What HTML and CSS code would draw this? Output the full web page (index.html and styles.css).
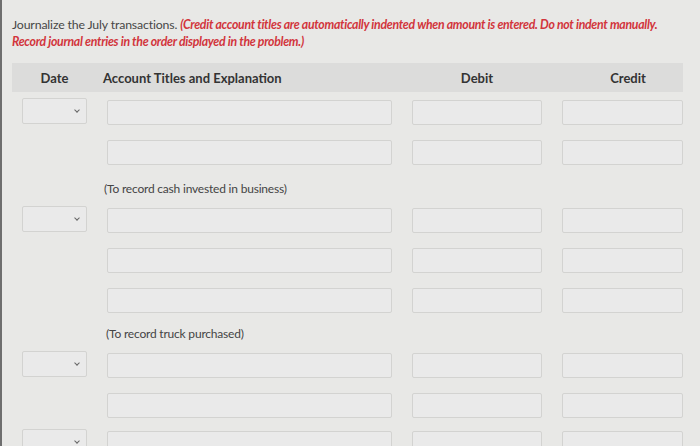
FILE: index.html
```
<!DOCTYPE html>
<html>
<head>
<meta charset="utf-8">
<link rel="stylesheet" href="styles.css">
</head>
<body>
<div class="page">
  <div class="intro">
    <div class="line">Journalize the July transactions. <em class="note">(Credit account titles are automatically indented when amount is entered. Do not indent manually.</em></div>
    <div class="line"><em class="note">Record journal entries in the order displayed in the problem.)</em></div>
  </div>
  <div class="table">
    <div class="head">
      <div class="h-date">Date</div>
      <div class="h-acct">Account Titles and Explanation</div>
      <div class="h-debit">Debit</div>
      <div class="h-credit">Credit</div>
    </div>

    <div class="row">
      <div class="sel"><span class="chev"></span></div>
      <div class="box acct"></div><div class="box debit"></div><div class="box credit"></div>
    </div>
    <div class="row">
      <div class="nosel"></div>
      <div class="box acct"></div><div class="box debit"></div><div class="box credit"></div>
    </div>
    <div class="expl">(To record cash invested in business)</div>

    <div class="row">
      <div class="sel"><span class="chev"></span></div>
      <div class="box acct"></div><div class="box debit"></div><div class="box credit"></div>
    </div>
    <div class="row">
      <div class="nosel"></div>
      <div class="box acct"></div><div class="box debit"></div><div class="box credit"></div>
    </div>
    <div class="row">
      <div class="nosel"></div>
      <div class="box acct"></div><div class="box debit"></div><div class="box credit"></div>
    </div>
    <div class="expl expl2">(To record truck purchased)</div>

    <div class="row">
      <div class="sel"><span class="chev"></span></div>
      <div class="box acct"></div><div class="box debit"></div><div class="box credit"></div>
    </div>
    <div class="row">
      <div class="nosel"></div>
      <div class="box acct"></div><div class="box debit"></div><div class="box credit"></div>
    </div>
    <div class="row last">
      <div class="sel"><span class="chev"></span></div>
      <div class="box acct"></div><div class="box debit"></div><div class="box credit"></div>
    </div>
  </div>
</div>
</body>
</html>
```
FILE: styles.css
```
html, body {
  margin: 0;
  padding: 0;
  height: 100%;
  overflow: hidden;
}
body {
  background: #e8e8e6;
  font-family: Lato, "Open Sans", sans-serif;
  color: #3d3d3d;
  border-left: 2px solid #6e6e6e;
  box-sizing: border-box;
}
.page {
  padding: 16px 0 0 10px;
}
.intro {
  font-size: 12.3px;
  line-height: 17px;
  letter-spacing: -0.15px;
  color: #474747;
}
.line {
  white-space: nowrap;
}
.note {
  color: #d2353c;
  font-weight: 700;
  letter-spacing: -0.3px;
}
.table {
  margin-top: 13px;
  width: 671px;
}
.head {
  display: grid;
  grid-template-columns: 85px 304px 150px 132px;
  height: 29px;
  align-items: center;
  background: #dcdcdb;
  font-weight: 700;
  font-size: 13px;
  color: #333;
}
.h-date { text-align: center; }
.h-acct { padding-left: 6px; }
.h-debit { text-align: center; padding-left: 2px; }
.h-credit { text-align: center; padding-left: 22px; }
.row {
  display: grid;
  grid-template-columns: 64px 285px 130px 121px;
  column-gap: 20px;
  height: 25px;
  margin-left: 11px;
  margin-top: 15px;
}
.head + .row { margin-top: 8px; }
.row.last { margin-top: 13px; }
.sel, .box {
  border: 1px solid #d3d3d1;
  border-radius: 2px;
  background: #eaeaea;
  box-sizing: border-box;
}
.sel {
  position: relative;
  margin-top: -2px;
  margin-left: -1px;
  height: 26px;
}
.chev {
  position: absolute;
  right: 7px;
  top: 9px;
  width: 3px;
  height: 3px;
  border-right: 1.5px solid #666;
  border-bottom: 1.5px solid #666;
  transform: rotate(45deg);
}
.expl {
  font-size: 12px;
  line-height: 16px;
  margin: 16px 0 0 92px;
  height: 12px;
  color: #444;
  letter-spacing: -0.2px;
}
.expl2 { margin-left: 94px; margin-top: 13px; }
.expl + .row { margin-top: 15px; }
.expl2 + .row { margin-top: 15px; }
```
